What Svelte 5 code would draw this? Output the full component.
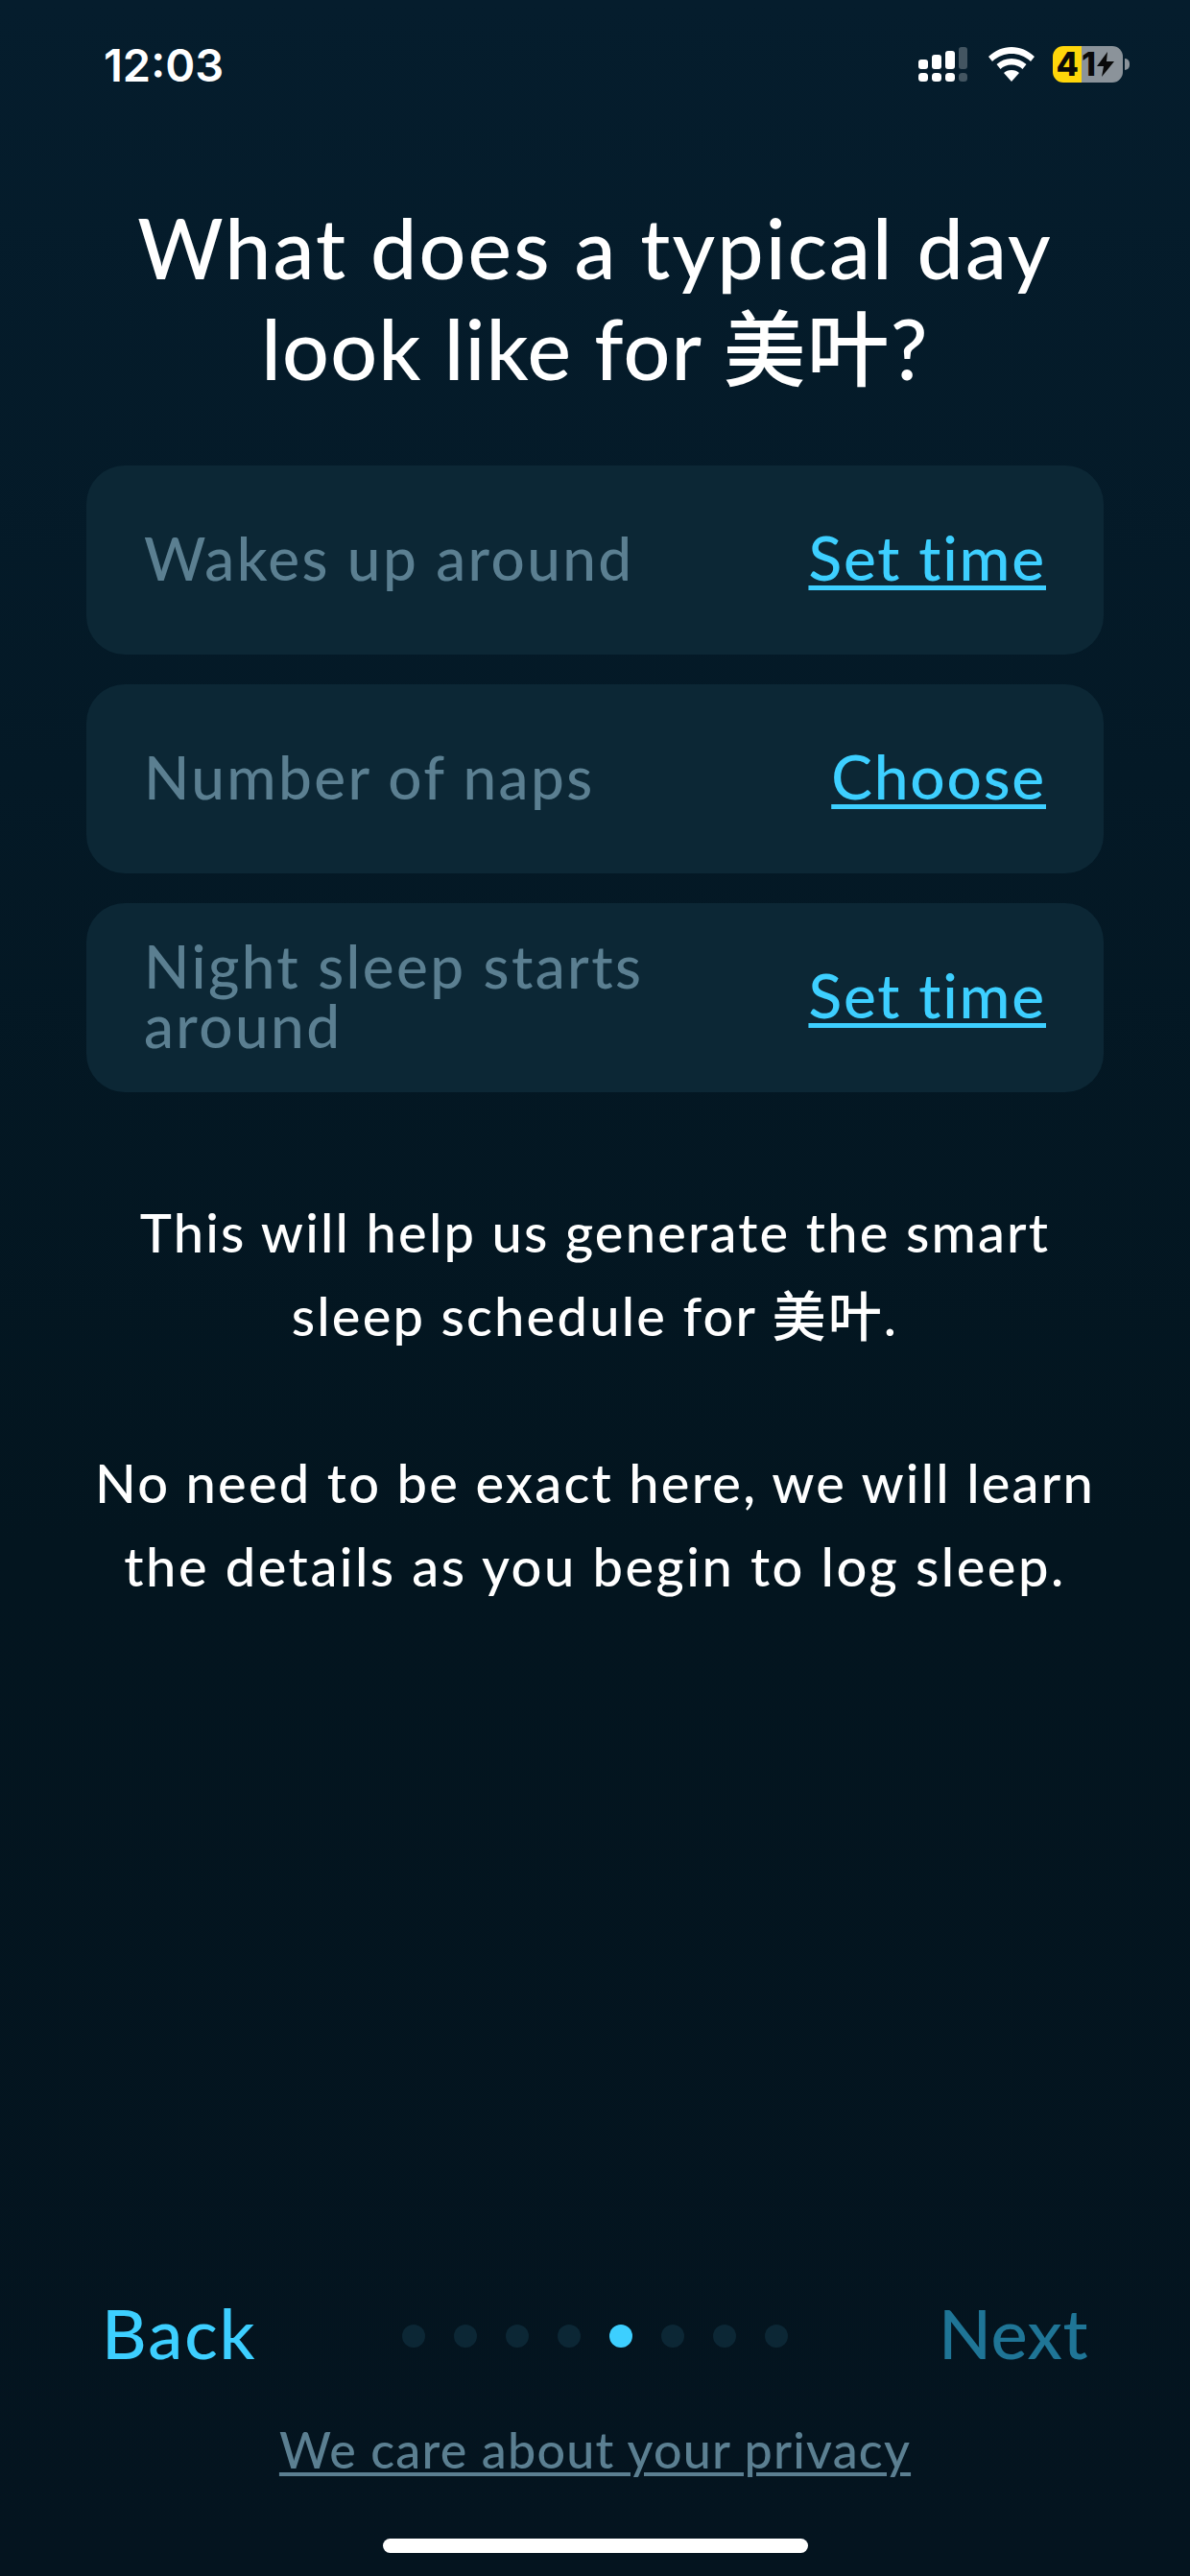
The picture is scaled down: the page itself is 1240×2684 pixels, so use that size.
<script>
  const rows = [
    { label: 'Wakes up around', action: 'Set time' },
    { label: 'Number of naps', action: 'Choose' },
    { label: 'Night sleep starts around', action: 'Set time' }
  ]
  const steps = 8
  const current = 4
</script>

<div class="screen">
  <div class="status">
    <span class="clock">12:03</span>
    <div class="indicators">
      <svg class="signal" width="51" height="36" viewBox="0 0 51 36">
        <rect x="0" y="13" width="10" height="10" rx="3" fill="#fff" />
        <rect x="14" y="8" width="10" height="15" rx="3" fill="#fff" />
        <rect x="28" y="4" width="10" height="19" rx="3" fill="#fff" />
        <rect x="42" y="0" width="9" height="23" rx="3" fill="#fff" opacity=".25" />
        <rect x="0" y="27" width="10" height="9" rx="3.5" fill="#fff" />
        <rect x="14" y="27" width="10" height="9" rx="3.5" fill="#fff" />
        <rect x="28" y="27" width="10" height="9" rx="3.5" fill="#fff" />
        <rect x="42" y="27" width="9" height="9" rx="3.5" fill="#fff" opacity=".25" />
      </svg>
      <svg class="wifi" width="48" height="36" viewBox="0 0 48 36">
        <path d="M24 0C15 0 7 3.500 0 10l4 5C10 9.500 17 7 24 7s14 2.500 20 8l4-5C41 3.500 33 0 24 0z" fill="#fff" />
        <path d="M24 12c-6 0-11 2-15.500 6l4 5c3-3 7-4.500 11.500-4.500S32.500 20 35.500 23l4-5C35 14 30 12 24 12z" fill="#fff" />
        <path d="M24 24c-3.500 0-6 1-8 3l8 9 8-9c-2-2-4.500-3-8-3z" fill="#fff" />
      </svg>
      <div class="battery">
        <div class="cell">
          <span class="charge">4</span>
          <span class="rest">1<svg width="20" height="26" viewBox="0 0 20 26"><path d="M12 0 1 15h7l-2 11 13-16h-8z" fill="#0a0a0a" /></svg></span>
        </div>
        <span class="nub"></span>
      </div>
    </div>
  </div>

  <h1>What does a typical day<br /><span class="tight">look like for 美叶?</span></h1>

  <div class="rows">
    {#each rows as row}
      <div class="row">
        <span class="label">{row.label}</span>
        <a class="action" href="#top">{row.action}</a>
      </div>
    {/each}
  </div>

  <div class="copy">
    <p>This will help us generate the smart<br />sleep schedule for 美叶.</p>
    <p>No need to be exact here, we will learn<br /><span class="wide">the details as you begin to log sleep.</span></p>
  </div>

  <div class="footer">
    <div class="nav">
      <a class="back" href="#top">Back</a>
      <div class="dots">
        {#each Array(steps) as _, i}
          <span class="dot" class:on={i === current}></span>
        {/each}
      </div>
      <a class="next" href="#top">Next</a>
    </div>
    <a class="privacy" href="#top">We care about your privacy</a>
    <div class="home"></div>
  </div>
</div>

<style>
  :global(body) {
    margin: 0;
    background: #03141f;
  }

  .screen {
    box-sizing: border-box;
    width: 1240px;
    height: 2684px;
    display: flex;
    flex-direction: column;
    background: linear-gradient(180deg, #051d2d 0%, #03151f 60%, #04141f 100%);
    color: #fff;
    font-family: Lato, 'Noto Sans CJK SC', sans-serif;
    font-weight: 500;
    overflow: hidden;
  }

  .status {
    display: flex;
    justify-content: space-between;
    align-items: center;
    height: 38px;
    padding: 48px 63px 0 108px;
  }

  .clock {
    font-family: Inter, sans-serif;
    font-size: 47px;
    font-weight: 600;
  }

  .indicators {
    display: flex;
    align-items: center;
  }

  .signal {
    margin-right: 22px;
  }

  .wifi {
    margin-right: 19px;
  }

  .battery {
    display: flex;
    align-items: center;
  }

  .cell {
    display: flex;
    width: 73px;
    height: 38px;
    font-family: Inter, sans-serif;
    font-size: 34px;
    font-weight: 800;
    line-height: 38px;
    color: #0a0a0a;
  }

  .charge {
    width: 27px;
    padding-right: 3px;
    text-align: right;
    border-radius: 11px 0 0 11px;
    background: #ffd60a;
  }

  .rest {
    flex: 1;
    display: flex;
    align-items: center;
    border-radius: 0 11px 11px 0;
    background: #8b939a;
  }

  .nub {
    width: 5px;
    height: 12px;
    margin-left: 2px;
    border-radius: 0 6px 6px 0;
    background: #8b939a;
  }

  h1 {
    margin: 119px 0 0;
    font-size: 86px;
    font-weight: 500;
    line-height: 105px;
    text-align: center;
    letter-spacing: 2.1px;
  }

  .tight {
    letter-spacing: 1.2px;
  }

  .rows {
    display: flex;
    flex-direction: column;
    gap: 31px;
    margin: 70px 90px 0;
  }

  .row {
    box-sizing: border-box;
    display: flex;
    justify-content: space-between;
    align-items: center;
    height: 197px;
    padding: 0 60px 6px;
    border-radius: 40px;
    background: #0c2735;
  }

  .label {
    max-width: 540px;
    font-size: 62px;
    line-height: 62px;
    color: #5b7f91;
    letter-spacing: 2.4px;
  }

  .action {
    font-size: 64px;
    color: #3dcfff;
    letter-spacing: 1.8px;
    text-decoration-thickness: 5px;
    text-underline-offset: 5px;
  }

  .copy {
    margin-top: 102px;
    font-size: 56px;
    line-height: 87px;
    text-align: center;
    letter-spacing: 2.2px;
  }

  .wide {
    letter-spacing: 2.5px;
  }

  .copy p {
    margin: 0 0 87px;
  }

  .footer {
    margin-top: auto;
    display: flex;
    flex-direction: column;
    align-items: center;
  }

  .nav {
    align-self: stretch;
    display: flex;
    justify-content: space-between;
    align-items: center;
    padding: 0 106px;
  }

  .back,
  .next {
    font-size: 72px;
    text-decoration: none;
  }

  .back {
    letter-spacing: 2px;
    color: #3dcfff;
  }

  .next {
    letter-spacing: 0.5px;
    color: #1f7596;
  }

  .dots {
    display: flex;
    gap: 30px;
    margin: 8px 0 0 -6px;
  }

  .dot {
    width: 24px;
    height: 24px;
    border-radius: 50%;
    background: #0c2735;
  }

  .dot.on {
    background: #3dcfff;
  }

  .privacy {
    margin-top: 48px;
    font-size: 52px;
    letter-spacing: 1.2px;
    color: #5b7f91;
    text-decoration-thickness: 4px;
    text-underline-offset: 4px;
  }

  .home {
    width: 443px;
    height: 15px;
    margin: 62px 0 24px;
    border-radius: 8px;
    background: #fff;
  }
</style>
